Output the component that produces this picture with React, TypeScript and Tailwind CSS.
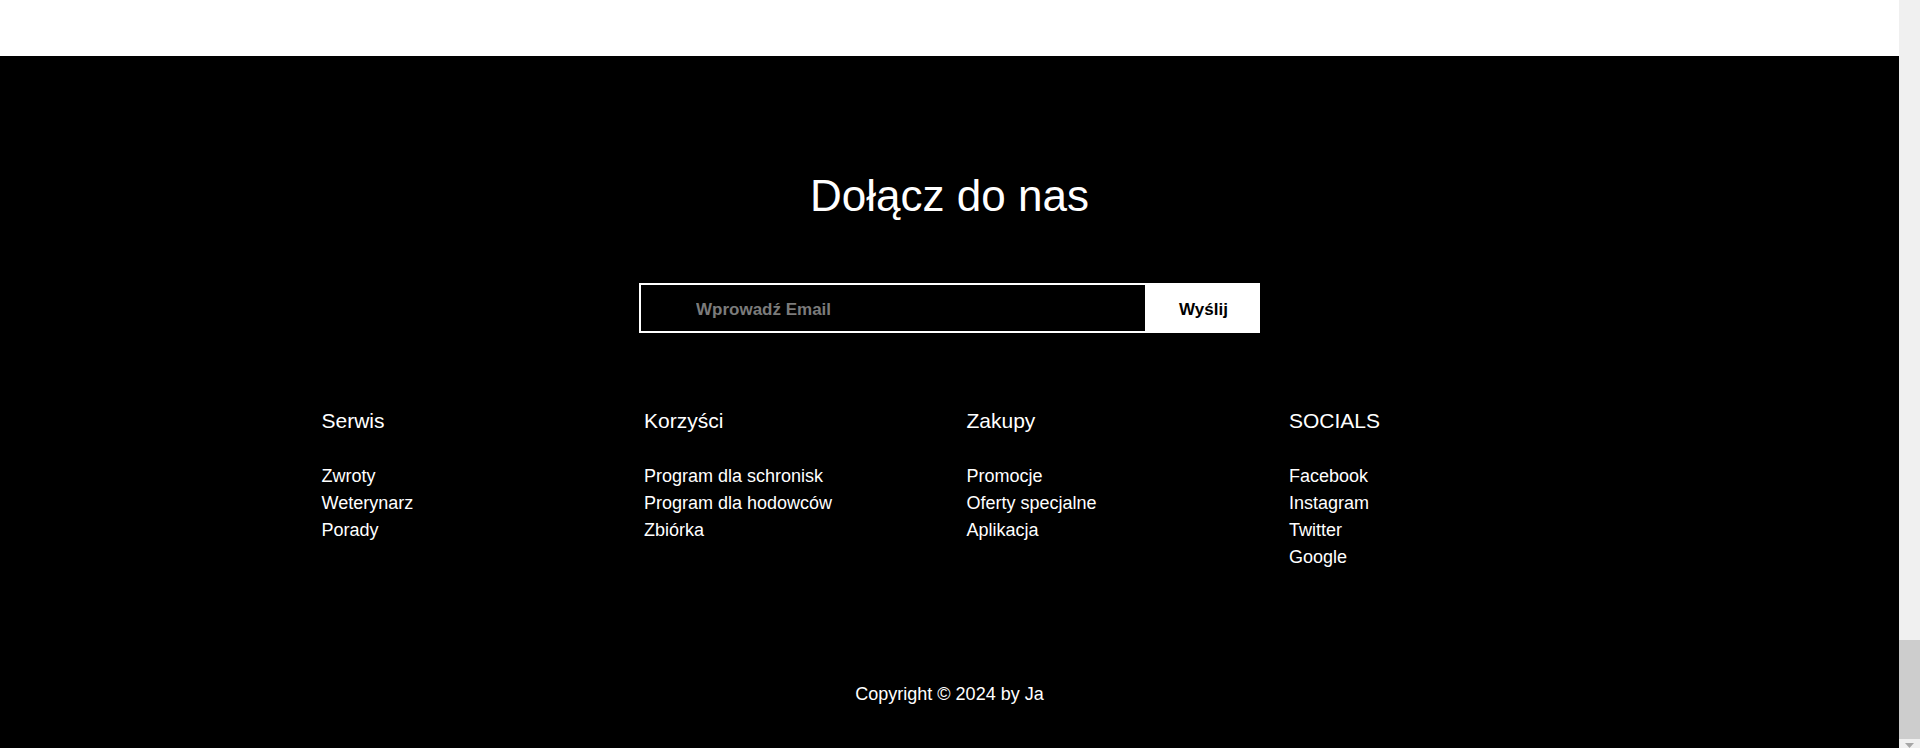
import { useState } from "react";

const columns = [
  { title: "Serwis", links: ["Zwroty", "Weterynarz", "Porady"] },
  { title: "Korzyści", links: ["Program dla schronisk", "Program dla hodowców", "Zbiórka"] },
  { title: "Zakupy", links: ["Promocje", "Oferty specjalne", "Aplikacja"] },
  { title: "SOCIALS", links: ["Facebook", "Instagram", "Twitter", "Google"] },
];

const Footer = () => {
  const [email, setEmail] = useState("");

  return (
    <footer className="bg-black text-white pt-[114px]">
      {/* ===== NEWSLETTER ===== */}
      <h2 className="text-center text-[44px] leading-[52px] font-normal">Dołącz do nas</h2>

      <form
        className="mt-[61px] mx-auto flex w-[621px] h-[50px]"
        onSubmit={(e) => e.preventDefault()}
      >
        <input
          type="email"
          value={email}
          onChange={(e) => setEmail(e.target.value)}
          placeholder="Wprowadź Email"
          className="w-[508px] shrink-0 h-full bg-black border-2 border-white pl-[55px] pt-[4px] text-[17px] font-bold text-white outline-none placeholder:text-[#7b7b7b]"
        />
        <button
          type="submit"
          className="w-[113px] shrink-0 h-full bg-white pt-[4px] text-black text-[17px] font-bold"
        >
          Wyślij
        </button>
      </form>

      {/* ===== LINKS ===== */}
      <div className="mt-[74px] mx-auto w-[1256px] grid grid-cols-4 gap-x-[34px]">
        {columns.map((col) => (
          <div key={col.title}>
            <h3 className="text-[21px] leading-[28px] font-normal">{col.title}</h3>
            <ul className="mt-[28px] text-[18px] leading-[27px]">
              {col.links.map((link) => (
                <li key={link}>
                  <a href="#">{link}</a>
                </li>
              ))}
            </ul>
          </div>
        ))}
      </div>

      {/* ===== COPYRIGHT ===== */}
      <p className="mt-[110px] text-center text-[18px] leading-[27px] pb-[40px]">
        Copyright © 2024 by Ja
      </p>
    </footer>
  );
};

const Scrollbar = () => (
  <div className="w-[21px] shrink-0 h-full bg-[#f0f0f0] flex flex-col">
    <div className="flex-1" />
    <div className="h-[99px] bg-[#cdcdcd]" />
    <div className="h-[9px] flex justify-center items-end">
      <svg width="9" height="5" viewBox="0 0 9 5">
        <path d="M0 0 L9 0 L4.5 5 Z" fill="#a6a6a6" />
      </svg>
    </div>
  </div>
);

export default function App() {
  return (
    <div className="flex h-[748px] overflow-hidden font-['Liberation_Sans',Arial,sans-serif]">
      <main className="flex-1 min-w-0">
        <div className="h-[56px] bg-white" />
        <Footer />
      </main>
      <Scrollbar />
    </div>
  );
}
